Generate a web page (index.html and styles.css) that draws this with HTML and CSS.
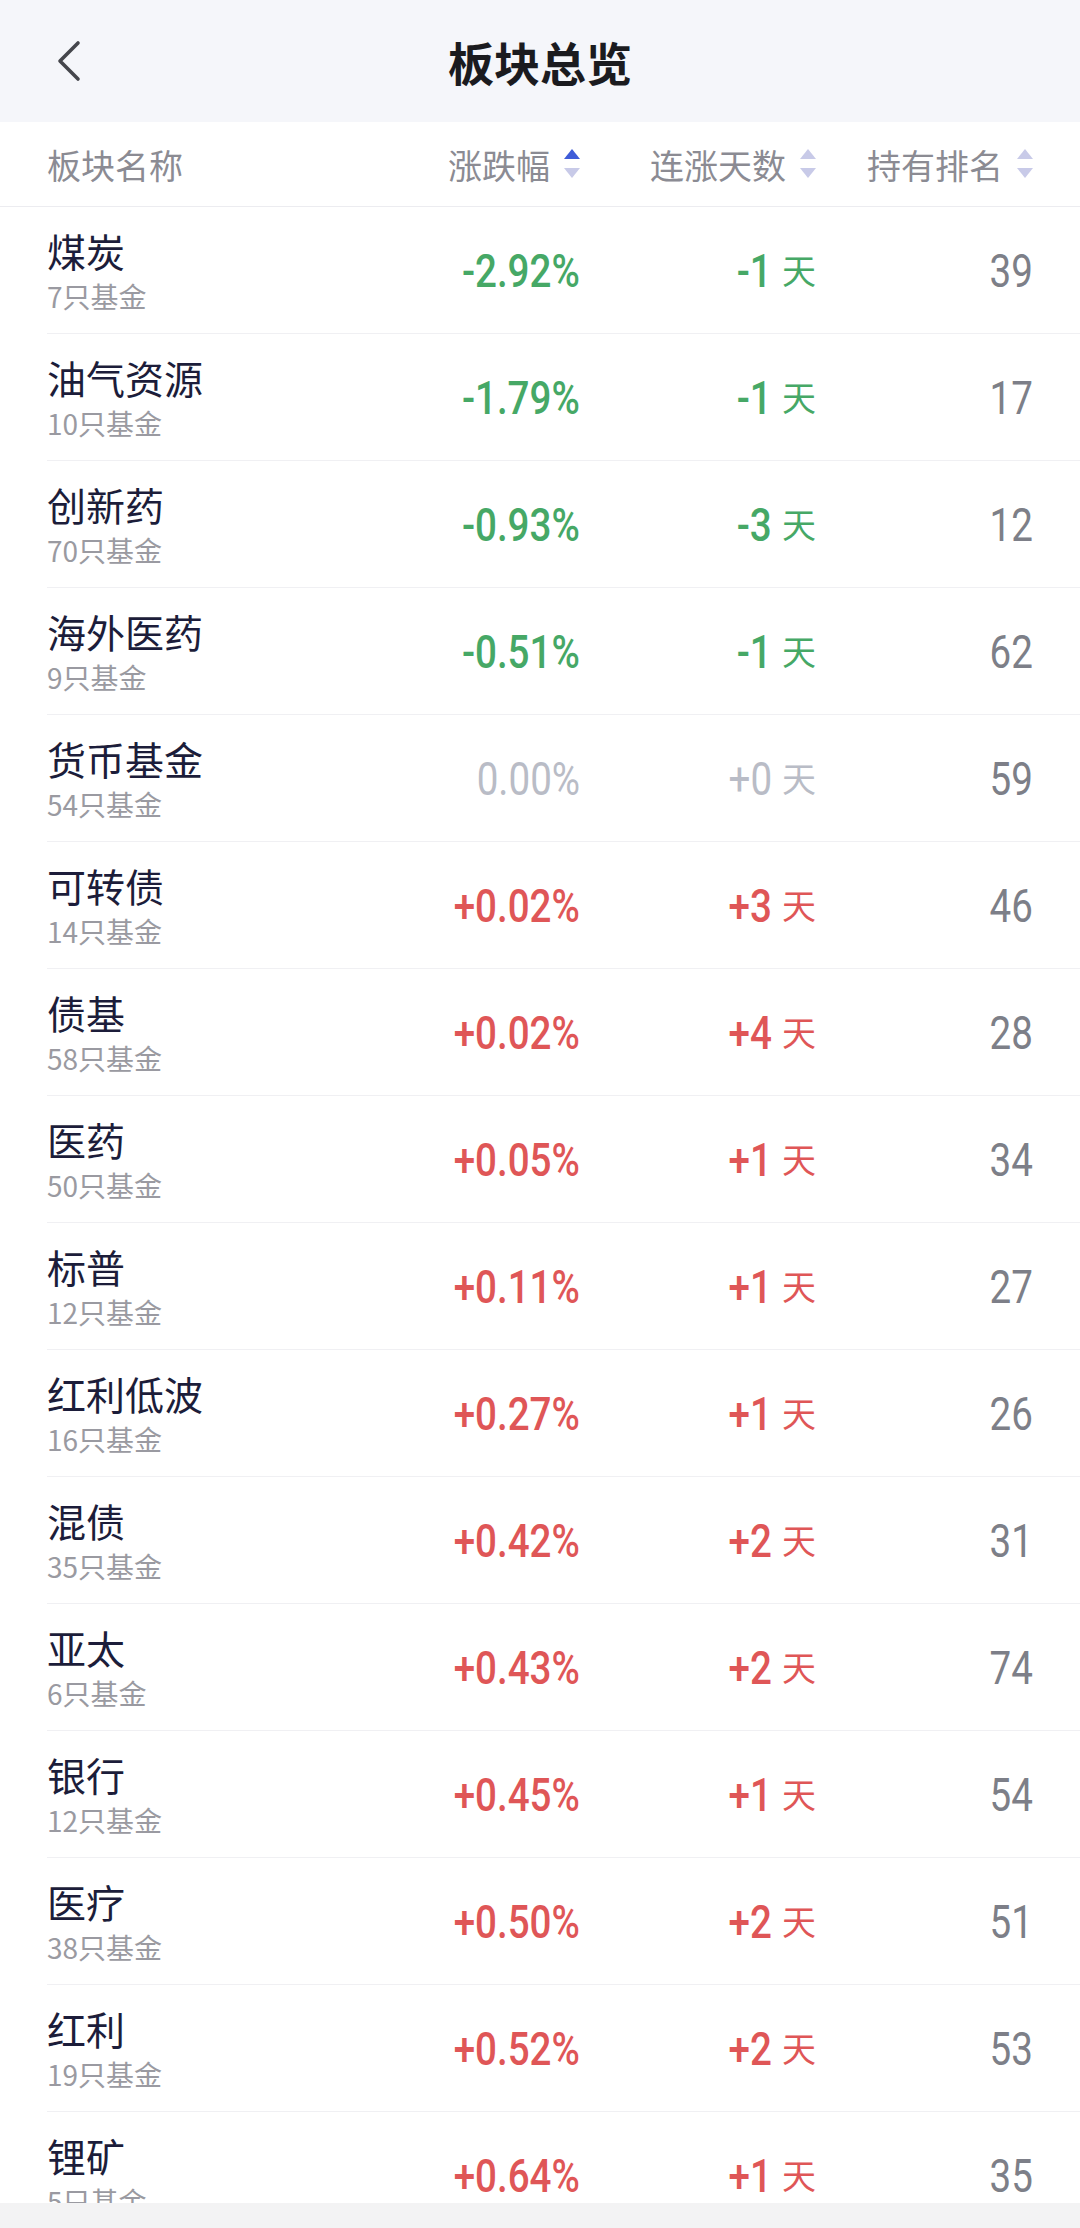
FILE: index.html
```html
<!DOCTYPE html>
<html lang="zh-CN">
<head>
  <meta charset="UTF-8" />
  <title>板块总览</title>
  <meta name="viewport" content="width=device-width, initial-scale=1.0" />
  <link rel="stylesheet" href="styles.css">
</head>
<body>
  <div class="page">
    <div class="topbar">
      <div class="back">
        <svg width="26" height="42" viewBox="0 0 26 42"><polyline points="22,3 4,21 22,39" fill="none" stroke="#45464c" stroke-width="3.6" stroke-linecap="round" stroke-linejoin="round"/></svg>
      </div>
      <h1 class="title">板块总览</h1>
      <div></div>
    </div>

    <div class="list">
      <div class="head-row">
        <span class="col-name">板块名称</span>
        <span class="col">涨跌幅
          <svg class="sort" width="16" height="32" viewBox="0 0 16 32"><path d="M8 1L16 11H0Z" fill="#3f5cd8"/><path d="M0 20H16L8 30Z" fill="#c8cae8"/></svg>
        </span>
        <span class="col">连涨天数
          <svg class="sort" width="16" height="32" viewBox="0 0 16 32"><path d="M8 1L16 11H0Z" fill="#c8cae8"/><path d="M0 20H16L8 30Z" fill="#c8cae8"/></svg>
        </span>
        <span class="col">持有排名
          <svg class="sort" width="16" height="32" viewBox="0 0 16 32"><path d="M8 1L16 11H0Z" fill="#c8cae8"/><path d="M0 20H16L8 30Z" fill="#c8cae8"/></svg>
        </span>
      </div>

      <div class="row down">
        <div class="name"><div>煤炭</div><div class="count">7只基金</div></div>
        <div class="pct"><span class="num">-2.92%</span></div>
        <div class="days"><span class="num">-1</span><span class="unit">天</span></div>
        <div class="rank"><span class="num">39</span></div>
      </div>
      <div class="row down">
        <div class="name"><div>油气资源</div><div class="count">10只基金</div></div>
        <div class="pct"><span class="num">-1.79%</span></div>
        <div class="days"><span class="num">-1</span><span class="unit">天</span></div>
        <div class="rank"><span class="num">17</span></div>
      </div>
      <div class="row down">
        <div class="name"><div>创新药</div><div class="count">70只基金</div></div>
        <div class="pct"><span class="num">-0.93%</span></div>
        <div class="days"><span class="num">-3</span><span class="unit">天</span></div>
        <div class="rank"><span class="num">12</span></div>
      </div>
      <div class="row down">
        <div class="name"><div>海外医药</div><div class="count">9只基金</div></div>
        <div class="pct"><span class="num">-0.51%</span></div>
        <div class="days"><span class="num">-1</span><span class="unit">天</span></div>
        <div class="rank"><span class="num">62</span></div>
      </div>
      <div class="row flat">
        <div class="name"><div>货币基金</div><div class="count">54只基金</div></div>
        <div class="pct"><span class="num">0.00%</span></div>
        <div class="days"><span class="num">+0</span><span class="unit">天</span></div>
        <div class="rank"><span class="num">59</span></div>
      </div>
      <div class="row up">
        <div class="name"><div>可转债</div><div class="count">14只基金</div></div>
        <div class="pct"><span class="num">+0.02%</span></div>
        <div class="days"><span class="num">+3</span><span class="unit">天</span></div>
        <div class="rank"><span class="num">46</span></div>
      </div>
      <div class="row up">
        <div class="name"><div>债基</div><div class="count">58只基金</div></div>
        <div class="pct"><span class="num">+0.02%</span></div>
        <div class="days"><span class="num">+4</span><span class="unit">天</span></div>
        <div class="rank"><span class="num">28</span></div>
      </div>
      <div class="row up">
        <div class="name"><div>医药</div><div class="count">50只基金</div></div>
        <div class="pct"><span class="num">+0.05%</span></div>
        <div class="days"><span class="num">+1</span><span class="unit">天</span></div>
        <div class="rank"><span class="num">34</span></div>
      </div>
      <div class="row up">
        <div class="name"><div>标普</div><div class="count">12只基金</div></div>
        <div class="pct"><span class="num">+0.11%</span></div>
        <div class="days"><span class="num">+1</span><span class="unit">天</span></div>
        <div class="rank"><span class="num">27</span></div>
      </div>
      <div class="row up">
        <div class="name"><div>红利低波</div><div class="count">16只基金</div></div>
        <div class="pct"><span class="num">+0.27%</span></div>
        <div class="days"><span class="num">+1</span><span class="unit">天</span></div>
        <div class="rank"><span class="num">26</span></div>
      </div>
      <div class="row up">
        <div class="name"><div>混债</div><div class="count">35只基金</div></div>
        <div class="pct"><span class="num">+0.42%</span></div>
        <div class="days"><span class="num">+2</span><span class="unit">天</span></div>
        <div class="rank"><span class="num">31</span></div>
      </div>
      <div class="row up">
        <div class="name"><div>亚太</div><div class="count">6只基金</div></div>
        <div class="pct"><span class="num">+0.43%</span></div>
        <div class="days"><span class="num">+2</span><span class="unit">天</span></div>
        <div class="rank"><span class="num">74</span></div>
      </div>
      <div class="row up">
        <div class="name"><div>银行</div><div class="count">12只基金</div></div>
        <div class="pct"><span class="num">+0.45%</span></div>
        <div class="days"><span class="num">+1</span><span class="unit">天</span></div>
        <div class="rank"><span class="num">54</span></div>
      </div>
      <div class="row up">
        <div class="name"><div>医疗</div><div class="count">38只基金</div></div>
        <div class="pct"><span class="num">+0.50%</span></div>
        <div class="days"><span class="num">+2</span><span class="unit">天</span></div>
        <div class="rank"><span class="num">51</span></div>
      </div>
      <div class="row up">
        <div class="name"><div>红利</div><div class="count">19只基金</div></div>
        <div class="pct"><span class="num">+0.52%</span></div>
        <div class="days"><span class="num">+2</span><span class="unit">天</span></div>
        <div class="rank"><span class="num">53</span></div>
      </div>
      <div class="row up">
        <div class="name"><div>锂矿</div><div class="count">5只基金</div></div>
        <div class="pct"><span class="num">+0.64%</span></div>
        <div class="days"><span class="num">+1</span><span class="unit">天</span></div>
        <div class="rank"><span class="num">35</span></div>
      </div>
    </div>

    <div class="bottom-strip"></div>
  </div>
</body>
</html>
```

FILE: styles.css
```css
body {
  margin: 0;
  font-family: "Noto Sans CJK SC", "Noto Sans", sans-serif;
  background: #fff;
}

.page {
  height: 2228px;
  display: flex;
  flex-direction: column;
  overflow: hidden;
}

.topbar {
  height: 122px;
  flex-shrink: 0;
  background: #f5f6fa;
  display: grid;
  grid-template-columns: 1fr auto 1fr;
  align-items: center;
}

.back {
  padding-left: 56px;
  display: flex;
  align-items: center;
}

.title {
  margin: 0;
  font-size: 46px;
  font-weight: 700;
  color: #1b1b1f;
}

.list {
  flex: 1;
  overflow: hidden;
}

.head-row {
  height: 84px;
  padding: 0 47px;
  border-bottom: 1px solid #ececf0;
  display: grid;
  grid-template-columns: 297px 236px 236px 217px;
  align-items: center;
  font-size: 34px;
  color: #8b8b93;
}

.head-row .col {
  display: flex;
  align-items: center;
  justify-content: flex-end;
  gap: 14px;
}

.row {
  height: 126px;
  margin-left: 47px;
  padding-right: 47px;
  border-bottom: 1px solid #f0f0f3;
  display: grid;
  grid-template-columns: 250px 283px 236px 217px;
  align-items: center;
}

.name {
  font-size: 39px;
  line-height: 46px;
  color: #1c1d3a;
  padding-top: 2px;
}

.name .count {
  font-size: 28px;
  line-height: 40px;
  margin-top: 3px;
  color: #9a9aa1;
}

.pct, .days, .rank {
  display: flex;
  align-items: center;
  justify-content: flex-end;
}

/* narrow digits, like the app's number font */
.num {
  display: inline-block;
  font-family: "Roboto", sans-serif;
  font-size: 47px;
  font-weight: 500;
  line-height: 1;
  transform: scaleX(0.82);
  transform-origin: right center;
}

.unit {
  font-size: 34px;
  line-height: 1;
  margin-left: 10px;
}

.rank {
  color: #7d7f88;
}

.rank .num {
  font-weight: 400;
}

.down .pct, .down .days {
  color: #46a866;
}

.up .pct, .up .days {
  color: #df5657;
}

.flat .pct, .flat .days {
  color: #b9bcc6;
}

.flat .num {
  font-weight: 400;
}

.bottom-strip {
  height: 25px;
  flex-shrink: 0;
  background: #f3f3f4;
}
```
